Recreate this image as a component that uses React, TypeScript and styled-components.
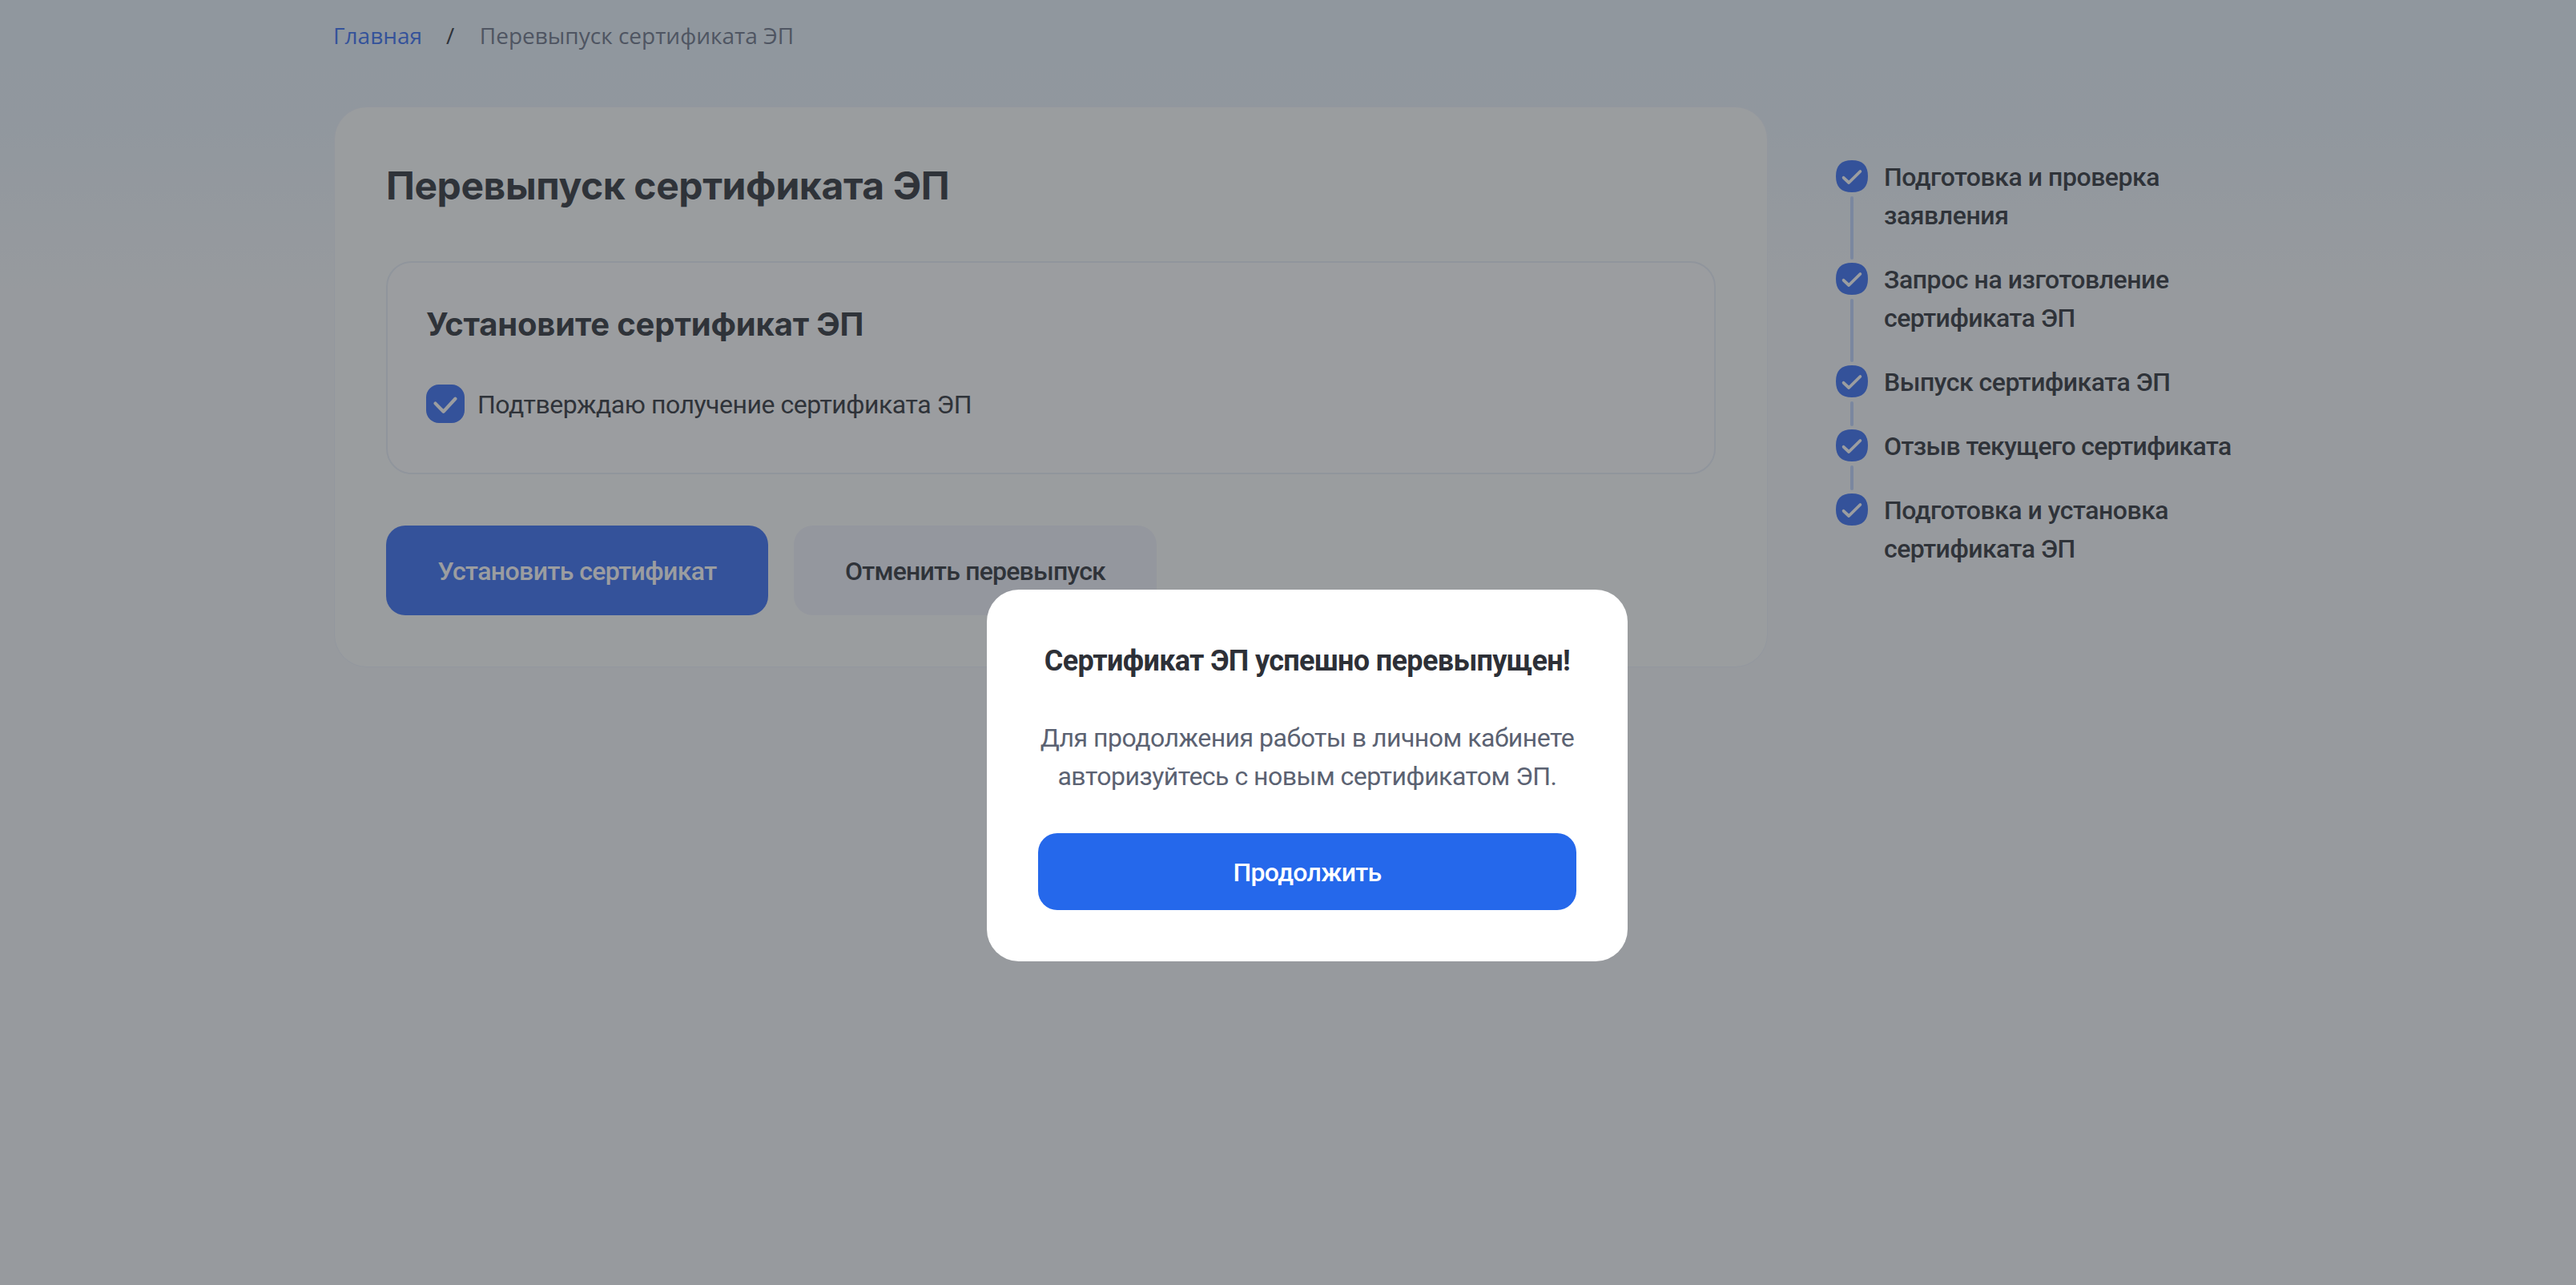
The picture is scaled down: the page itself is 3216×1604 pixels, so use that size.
import React from "react";
import styled, { createGlobalStyle } from "styled-components";

const color = {
  ink: "#2d3037",
  pageInk: "#272a31",
  muted: "#5b6272",
  crumb: "#666e82",
  blue: "#2568eb",
  pageBlue: "#3168f2",
  white: "#ffffff",
};

const GlobalStyle = createGlobalStyle`
  *, *::before, *::after { box-sizing: border-box; }
  html, body { margin: 0; padding: 0; }
  body {
    font-family: Roboto, "Noto Sans", sans-serif;
    color: ${color.ink};
    overflow: hidden;
  }
`;

const Page = styled.div`
  width: 100%;
  min-height: 100vh;
  padding: 24px 0 0 416px;
  background: linear-gradient(180deg, #e8f3fb 0, #eaf3fb 150px, #f7f9fb 380px, #f7f9fb 100%);
  color: ${color.pageInk};
`;

const Breadcrumbs = styled.nav`
  display: flex;
  gap: 30px;
  margin-bottom: 70px;
  font: 400 28px/40px "Open Sans", "Noto Sans", sans-serif;
`;

const CrumbLink = styled.a`
  color: ${color.pageBlue};
`;

const CrumbCurrent = styled.span`
  margin-left: 1.5px;
  color: ${color.crumb};
`;

const Columns = styled.main`
  display: flex;
  align-items: flex-start;
  gap: 86px;
  padding-left: 2px;
`;

const Card = styled.section`
  width: 1788px;
  padding: 64px;
  border-radius: 40px;
  background: #fdfefd;
  box-shadow: 0 0 0 1px #eef3fa;
`;

const Title = styled.h1`
  margin: 0 0 62px;
  padding-top: 2px;
  font: 700 48px/64px Inter, sans-serif;
  letter-spacing: -0.42px;
`;

const Panel = styled.div`
  height: 266px;
  padding: 49px 48px;
  border: 2px solid #e8eef6;
  border-radius: 32px;
  background: ${color.white};
`;

const PanelTitle = styled.h2`
  margin: 0 0 47px;
  font: 700 40px/56px Inter, sans-serif;
  letter-spacing: -0.18px;
`;

const CheckRow = styled.label`
  display: flex;
  gap: 16px;
  font-size: 32px;
  line-height: 50px;
  letter-spacing: -0.48px;
`;

const Actions = styled.div`
  display: flex;
  gap: 32px;
  margin-top: 64px;
`;

const Button = styled.button<{ $width: string; $height: number; $fill: string; $text: string; $spacing: number }>`
  width: ${(p) => p.$width};
  height: ${(p) => p.$height}px;
  padding: 2px 0 0;
  border: 0;
  border-radius: 24px;
  background: ${(p) => p.$fill};
  color: ${(p) => p.$text};
  font: 500 32px/48px Roboto, sans-serif;
  letter-spacing: ${(p) => p.$spacing}px;
`;

const StepList = styled.ol`
  display: flex;
  flex-direction: column;
  margin: 63px 0 0;
  padding: 0;
  list-style: none;
`;

const Step = styled.li`
  display: flex;
  gap: 20px;
`;

const StepRail = styled.div`
  display: flex;
  flex-direction: column;
  align-items: center;
  width: 40px;
  padding-top: 3px;
`;

const Connector = styled.div`
  flex: 1;
  width: 4px;
  margin: 5px 0 1px;
  border-radius: 2px;
  background: #bcd2fc;
`;

const StepText = styled.div`
  padding-bottom: 32px;
  font-size: 32px;
  font-weight: 500;
  line-height: 48px;
`;

const StepLine = styled.div<{ $spacing: number }>`
  letter-spacing: ${(p) => p.$spacing}px;
  white-space: nowrap;
`;

const Overlay = styled.div`
  position: fixed;
  inset: 0;
  display: flex;
  justify-content: center;
  align-items: flex-start;
  padding: 736px 0 0 48px;
  background: rgba(55, 60, 66, 0.5);
`;

const Modal = styled.div`
  width: 800px;
  height: 464px;
  padding: 65px 64px 64px;
  border-radius: 40px;
  background: ${color.white};
  text-align: center;
`;

const ModalTitle = styled.h3`
  margin: 0 0 48px;
  font-size: 36px;
  font-weight: 700;
  line-height: 48px;
  letter-spacing: -0.64px;
  white-space: nowrap;
`;

const ModalText = styled.p`
  margin: 0 0 47px;
  color: ${color.muted};
  font-size: 32px;
  line-height: 48px;
  letter-spacing: -0.5px;
  white-space: nowrap;
`;

const CheckboxIcon = () => (
  <svg width="48" height="48" viewBox="0 0 48 48" fill="none">
    <rect width="48" height="48" rx="16" fill={color.pageBlue} />
    <path d="M11.6 23.6L21.6 33.8L36.4 17.8" stroke="#fff" strokeWidth="4.2" strokeLinecap="round" strokeLinejoin="round" />
  </svg>
);

const StepIcon = () => (
  <svg width="40" height="40" viewBox="0 0 40 40" fill="none">
    <path d="M20 0C33.5 0 40 6.5 40 20S33.5 40 20 40S0 33.5 0 20S6.5 0 20 0Z" fill={color.pageBlue} />
    <path d="M9.6 21.8L16.2 28L30.4 14" stroke="#fff" strokeWidth="3.8" strokeLinecap="round" strokeLinejoin="round" />
  </svg>
);

const steps: { text: string; spacing: number }[][] = [
  [{ text: "Подготовка и проверка", spacing: -0.46 }, { text: "заявления", spacing: -0.42 }],
  [{ text: "Запрос на изготовление", spacing: -0.45 }, { text: "сертификата ЭП", spacing: -0.52 }],
  [{ text: "Выпуск сертификата ЭП", spacing: -0.5 }],
  [{ text: "Отзыв текущего сертификата", spacing: -0.62 }],
  [{ text: "Подготовка и установка", spacing: -0.48 }, { text: "сертификата ЭП", spacing: -0.52 }],
];

export default function App() {
  return (
    <>
      <GlobalStyle />
      <Page>
        <Breadcrumbs>
          <CrumbLink>Главная</CrumbLink>
          <span>/</span>
          <CrumbCurrent>Перевыпуск сертификата ЭП</CrumbCurrent>
        </Breadcrumbs>
        <Columns>
          <Card>
            <Title>Перевыпуск сертификата ЭП</Title>
            <Panel>
              <PanelTitle>Установите сертификат ЭП</PanelTitle>
              <CheckRow>
                <CheckboxIcon />
                Подтверждаю получение сертификата ЭП
              </CheckRow>
            </Panel>
            <Actions>
              <Button $width="477px" $height={112} $fill={color.pageBlue} $text={color.white} $spacing={-0.58}>
                Установить сертификат
              </Button>
              <Button $width="453px" $height={112} $fill="#f0f3fa" $text={color.pageInk} $spacing={-0.78}>
                Отменить перевыпуск
              </Button>
            </Actions>
          </Card>
          <StepList>
            {steps.map((lines, i) => (
              <Step key={i}>
                <StepRail>
                  <StepIcon />
                  {i < steps.length - 1 && <Connector />}
                </StepRail>
                <StepText>
                  {lines.map((line) => (
                    <StepLine key={line.text} $spacing={line.spacing}>{line.text}</StepLine>
                  ))}
                </StepText>
              </Step>
            ))}
          </StepList>
        </Columns>
      </Page>
      <Overlay>
        <Modal>
          <ModalTitle>Сертификат ЭП успешно перевыпущен!</ModalTitle>
          <ModalText>
            Для продолжения работы в личном кабинете
            <br />
            авторизуйтесь с новым сертификатом ЭП.
          </ModalText>
          <Button $width="100%" $height={96} $fill={color.blue} $text={color.white} $spacing={-0.67}>
            Продолжить
          </Button>
        </Modal>
      </Overlay>
    </>
  );
}
